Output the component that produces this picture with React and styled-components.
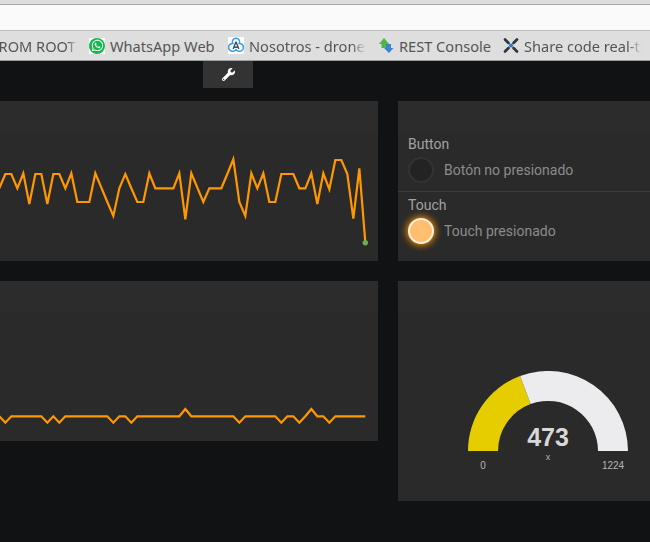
import React from 'react'
import styled, { createGlobalStyle } from 'styled-components'
import { FaWrench, FaWhatsapp } from 'react-icons/fa'

const Global = createGlobalStyle`
html, body {
    margin: 0;
    padding: 0;
    width: 650px;
    height: 542px;
    overflow: hidden;
    background: #111214;
}
`

const Page = styled.div`
width: 650px;
height: 542px;
overflow: hidden;
display: flex;
flex-direction: column;
font-family: 'Roboto', 'Liberation Sans', sans-serif;
`

const BrowserTop = styled.div`
height: 4px;
background: #dcdcdc;
border-bottom: 1px solid #a8a8a8;
`
const AddressBar = styled.div`
height: 25px;
background: #fafafa;
border-bottom: 1px solid #bdbdbd;
`
const Bookmarks = styled.div`
height: 29px;
background: #dedede;
border-bottom: 1px solid #9c9c9c;
display: flex;
align-items: center;
overflow: hidden;
white-space: nowrap;
flex-shrink: 0;
`
const Bookmark = styled.div`
display: flex;
align-items: center;
gap: 5px;
flex: 0 0 auto;
margin-left: ${(p) => p.$left}px;
`
const BookmarkLabel = styled.span`
display: block;
width: ${(p) => p.$width}px;
overflow: hidden;
font-family: 'Noto Sans', 'Open Sans', sans-serif;
font-size: 14.6px;
line-height: 20px;
color: #555555;
text-indent: ${(p) => p.$indent || 0}px;
${(p) => p.$fade && 'mask-image: linear-gradient(to right, #000 88%, transparent 100%);'}
`
const WhatsTile = styled.span`
width: 16px;
height: 16px;
background: #fff;
display: block;
`
const WhatsIcon = styled.span`
width: 16px;
height: 16px;
border-radius: 50%;
background: #12b94a;
color: #fff;
display: flex;
align-items: center;
justify-content: center;
font-size: 13px;
`

const TabRow = styled.div`
height: 27px;
padding-left: 203px;
flex-shrink: 0;
`
const ToolTab = styled.div`
width: 50px;
height: 27px;
background: #333333;
color: #fff;
display: flex;
align-items: center;
justify-content: center;
font-size: 13px;
`

const Grid = styled.div`
margin-top: 13px;
display: grid;
grid-template-columns: 378px 252px;
grid-auto-rows: min-content;
column-gap: 20px;
row-gap: 20px;
align-items: start;
`
const Panel = styled.div`
height: ${(p) => p.$height}px;
background: #2a2a2a;
display: flex;
flex-direction: column;
`
const PanelHead = styled.div`
height: 30px;
flex-shrink: 0;
background: #2c2c2c;
`
const Chart = styled.svg`
display: block;
width: 378px;
height: 130px;
`

const Row = styled.div`
padding: 5px 10px 0;
height: ${(p) => p.$height}px;
box-sizing: border-box;
border-bottom: ${(p) => (p.$line ? '1px solid #3a3a3a' : 'none')};
`
const RowTitle = styled.div`
font-size: 14px;
line-height: 16px;
color: #a3a3a3;
`
const RowBody = styled.div`
display: flex;
align-items: center;
gap: 10px;
margin-top: 5px;
`
const Led = styled.div`
width: 26px;
height: 26px;
box-sizing: border-box;
border-radius: 50%;
background: ${(p) => (p.$on ? '#ffbf6e' : '#232323')};
border: 2px solid ${(p) => (p.$on ? '#fff0dc' : '#333333')};
box-shadow: ${(p) => (p.$on ? '0 0 7px 1px #ff9800' : 'none')};
`
const RowText = styled.div`
font-size: 14px;
color: #8c8c8c;
`

const GaugeBox = styled.div`
flex: 1;
display: flex;
justify-content: center;
padding: 60px 0 0 47px;
`
const GaugeSvg = styled.svg`
display: block;
width: 180px;
height: 110px;
`

const top = [175, 132, 132, 175, 130, 222, 132, 132, 222, 132, 132, 175, 130, 216, 216, 216, 130, 173, 216, 258, 175, 132, 175, 216, 216, 130, 175, 175, 175, 175, 130, 268, 130, 173, 216, 175, 175, 175, 132, 88, 216, 258, 130, 175, 130, 216, 216, 132, 132, 132, 175, 175, 130, 222, 130, 178, 90, 90, 132, 266, 115, 338]
const bottom = [64, 83, 64, 64, 64, 64, 64, 64, 83, 64, 83, 64, 64, 64, 64, 64, 64, 64, 64, 83, 64, 64, 83, 64, 64, 64, 64, 64, 64, 64, 64, 42, 64, 64, 64, 64, 64, 64, 64, 64, 83, 64, 64, 64, 64, 64, 64, 83, 64, 64, 83, 64, 42, 64, 64, 83, 64, 64, 64, 64, 64, 64]

// y values were read off the 3x crops, panel body starts at 131 / 311
const toPoints = (data, base) =>
    data.map((v, i) => `${(i * 6 - 0.67).toFixed(2)},${(base + v / 3).toFixed(1)}`).join(' ')

const App = () => {
    return (
        <Page>
            <Global />
            <BrowserTop />
            <AddressBar />
            <Bookmarks>
                <Bookmark $left={0}>
                    <BookmarkLabel $width={77} $fade $indent={-9}>FROM ROOT</BookmarkLabel>
                </Bookmark>
                <Bookmark $left={12}>
                    <WhatsTile><WhatsIcon><FaWhatsapp /></WhatsIcon></WhatsTile>
                    <BookmarkLabel $width={106}>WhatsApp Web</BookmarkLabel>
                </Bookmark>
                <Bookmark $left={12}>
                    <svg width="16" height="17" viewBox="0 0 16 17">
                        <rect width="16" height="17" fill="#fff" />
                        <path d="M8 1.200A3.600 3.600 0 0 1 11.200 6.400 3.900 3.900 0 0 1 11.800 14.200 3.800 3.800 0 0 1 8 12.800 3.800 3.800 0 0 1 4.200 14.200 3.900 3.900 0 0 1 4.800 6.400 3.600 3.600 0 0 1 8 1.200Z" fill="none" stroke="#2f9fe8" strokeWidth="1.500" />
                        <path d="M8 4.800 5.200 12M8 4.800 10.800 12M5.800 10.200h4.400" fill="none" stroke="#444c58" strokeWidth="1.400" />
                    </svg>
                    <BookmarkLabel $width={117} $fade>Nosotros - drones</BookmarkLabel>
                </Bookmark>
                <Bookmark $left={12}>
                    <svg width="16" height="16" viewBox="0 0 16 16">
                        <path d="M6 0 11 6H8.500V10H3.500V6H1z" fill="#4cb648" />
                        <path d="M11 15 15.500 10H13V6H8V10H6z" fill="#3f83c9" />
                    </svg>
                    <BookmarkLabel $width={93}>REST Console</BookmarkLabel>
                </Bookmark>
                <Bookmark $left={11}>
                    <svg width="16" height="17" viewBox="0 0 16 17">
                        <path d="M2 2.500 5.500 6M14 2.500 10.500 6M2 14.500 5.500 11M14 14.500 10.500 11" stroke="#2b3440" strokeWidth="2.600" strokeLinecap="round" />
                        <circle cx="8" cy="8.500" r="2" fill="#2f74d0" />
                    </svg>
                    <BookmarkLabel $width={118} $fade>Share code real-time</BookmarkLabel>
                </Bookmark>
            </Bookmarks>
            <TabRow>
                <ToolTab><FaWrench /></ToolTab>
            </TabRow>
            <Grid>
                <Panel $height={160}>
                    <PanelHead />
                    <Chart viewBox="0 131 378 130">
                        <polyline points={toPoints(top, 130)} fill="none" stroke="#ff9800" strokeWidth="2.200" />
                        <circle cx="365.300" cy="242.700" r="2.700" fill="#6fae50" />
                    </Chart>
                </Panel>
                <Panel $height={160}>
                    <PanelHead />
                    <Row $height={61} $line>
                        <RowTitle>Button</RowTitle>
                        <RowBody>
                            <Led />
                            <RowText>Botón no presionado</RowText>
                        </RowBody>
                    </Row>
                    <Row $height={61}>
                        <RowTitle>Touch</RowTitle>
                        <RowBody>
                            <Led $on />
                            <RowText>Touch presionado</RowText>
                        </RowBody>
                    </Row>
                </Panel>
                <Panel $height={160}>
                    <PanelHead />
                    <Chart viewBox="0 311 378 130">
                        <polyline points={toPoints(bottom, 395)} fill="none" stroke="#ff9800" strokeWidth="2.200" />
                    </Chart>
                </Panel>
                <Panel $height={220}>
                    <PanelHead />
                    <GaugeBox>
                        <GaugeSvg viewBox="0 0 180 110">
                            <path d="M10 80A80 80 0 0 1 62.100 5L72.600 33.100A50 50 0 0 0 40 80Z" fill="#e6cd00" />
                            <path d="M62.100 5A80 80 0 0 1 170 80H140A50 50 0 0 0 72.600 33.100Z" fill="#ecebed" />
                            <text x="90" y="74.500" textAnchor="middle" fontFamily="Liberation Sans" fontWeight="700" fontSize="25" fill="#d8d8d8">473</text>
                            <text x="90" y="89" textAnchor="middle" fontFamily="Liberation Sans" fontSize="9" fill="#b5b5b5">x</text>
                            <text x="25" y="97.500" textAnchor="middle" fontFamily="Liberation Sans" fontSize="10" fill="#b5b5b5">0</text>
                            <text x="155" y="97.500" textAnchor="middle" fontFamily="Liberation Sans" fontSize="10" fill="#b5b5b5">1224</text>
                        </GaugeSvg>
                    </GaugeBox>
                </Panel>
            </Grid>
        </Page>
    )
}

export default App
